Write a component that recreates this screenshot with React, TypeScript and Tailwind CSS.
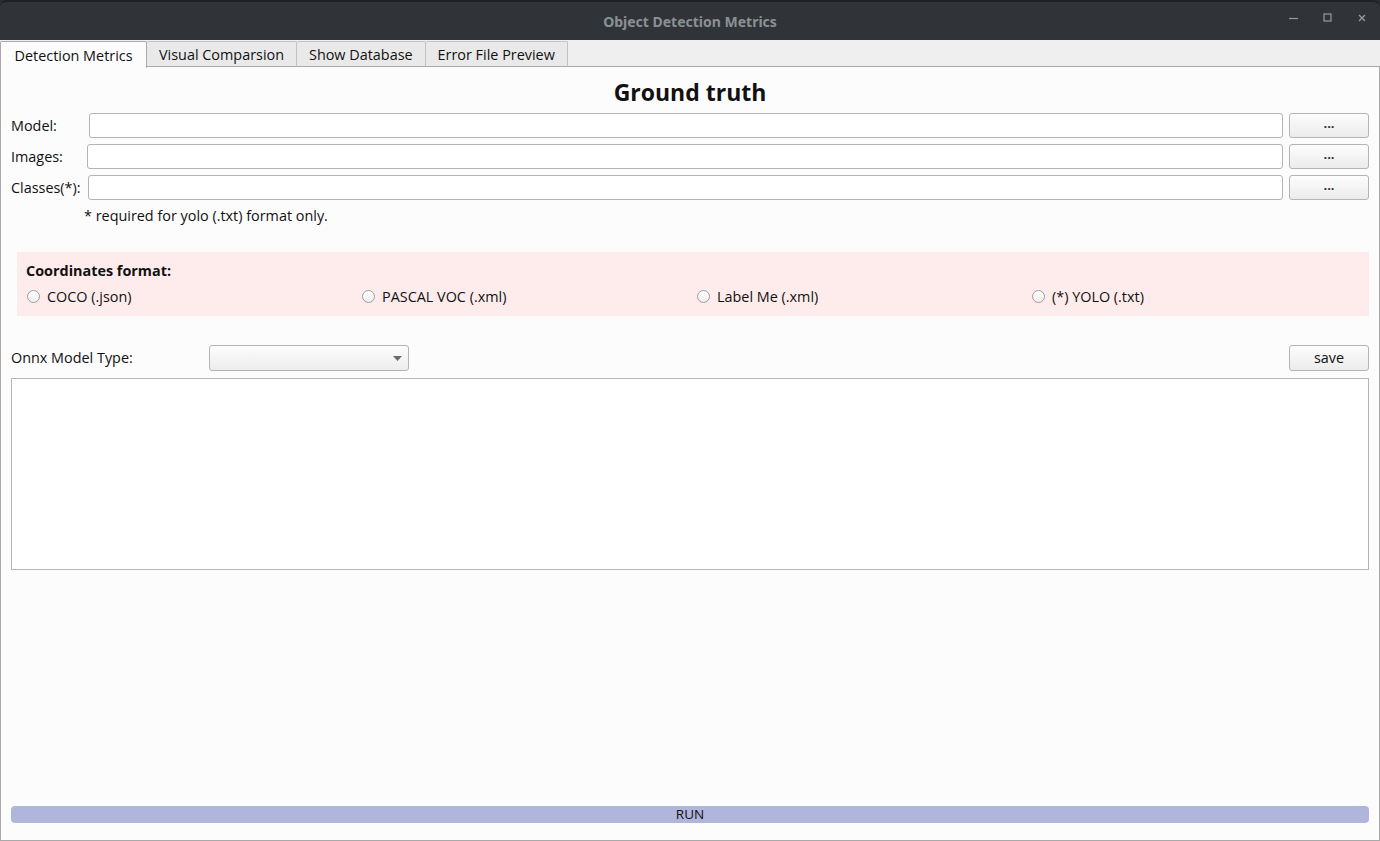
import { useState } from "react";

const tabs = ["Detection Metrics", "Visual Comparsion", "Show Database", "Error File Preview"];
const formats = ["COCO (.json)", "PASCAL VOC (.xml)", "Label Me (.xml)", "(*) YOLO (.txt)"];

function PathRow({ label, inputLeft }: { label: string; inputLeft: string }) {
    return (
        <div className="flex items-center h-[25px] pr-[10px]">
            <span className={`pl-[10px] shrink-0 ${inputLeft}`}>{label}</span>
            <div className="flex-1 h-[25px] bg-white border border-[#b4b4b4] rounded-[3px]" />
            <button className="ml-[6px] w-[80px] h-[25px] border border-[#b4b4b4] rounded-[3px] bg-gradient-to-b from-[#fcfcfc] to-[#ececec] text-[13px] leading-none pb-[4px] font-bold text-[#333]">
                ...
            </button>
        </div>
    );
}

function Radio({ label }: { label: string }) {
    return (
        <label className="flex items-center gap-[7px]">
            <span className="w-[13px] h-[13px] rounded-full border border-[#9e9e9e] bg-gradient-to-b from-white to-[#ededed]" />
            <span>{label}</span>
        </label>
    );
}

export default function App() {
    const [active] = useState(0);

    return (
        <div className="w-[1380px] h-[841px] bg-[#2b2e31] font-['Open_Sans',sans-serif] text-[14.4px] text-[#111] flex flex-col overflow-hidden">
            {/* title bar */}
            <div className="h-[40px] shrink-0 bg-[#303438] rounded-t-[7px] border-t-[2px] border-[#1e2123] flex items-center relative">
                <span className="flex-1 text-center font-bold text-[14px] text-[#8c9093] font-['Noto_Sans',sans-serif]">
                    Object Detection Metrics
                </span>
                <div className="absolute right-[11px] top-[9px] flex items-center gap-[20px]">
                    <svg width="14" height="14" viewBox="0 0 14 14">
                        <path d="M2 7.5h9" stroke="#9a9a9a" strokeWidth="1.2" />
                    </svg>
                    <svg width="14" height="14" viewBox="0 0 14 14">
                        <rect x="3" y="3" width="7" height="7" fill="none" stroke="#9a9a9a" strokeWidth="1.2" />
                    </svg>
                    <svg width="14" height="14" viewBox="0 0 14 14">
                        <path d="M4 4l6 6M10 4l-6 6" stroke="#9a9a9a" strokeWidth="1.3" />
                    </svg>
                </div>
            </div>

            {/* tabs */}
            <div className="h-[27px] shrink-0 bg-[#efefef] flex items-end">
                {tabs.map((t, i) =>
                    i === active ? (
                        <div
                            key={t}
                            className="h-[27px] px-[13.5px] pt-[2px] bg-[#fcfcfc] border border-b-0 border-[#aaaaaa] rounded-t-[2px] flex items-center relative top-[1px] z-10"
                        >
                            {t}
                        </div>
                    ) : (
                        <div
                            key={t}
                            className="h-[26px] px-[12px] pt-[2px] bg-[#e9e9e9] border border-l-0 border-[#c2c2c2] border-b-[#aaaaaa] rounded-t-[2px] flex items-center"
                        >
                            {t}
                        </div>
                    )
                )}
                <div className="flex-1 border-b border-[#aaaaaa]" />
            </div>

            {/* pane */}
            <div className="flex-1 bg-[#fcfcfc] border-x border-b border-[#a9a9a9] flex flex-col">
                <h1 className="text-center font-bold text-[23px] leading-none mt-[14px] h-[25px]">Ground truth</h1>

                <div className="mt-[7px] flex flex-col gap-[6px]">
                    <PathRow label="Model:" inputLeft="w-[88px]" />
                    <PathRow label="Images:" inputLeft="w-[86px]" />
                    <PathRow label="Classes(*):" inputLeft="w-[87px]" />
                </div>
                <div className="pl-[83px] mt-[5px] h-[20px]">* required for yolo (.txt) format only.</div>

                <div className="ml-[16px] mr-[10px] mt-[27px] h-[64px] bg-[#feecec] pl-[9px] pt-[8px]">
                    <div className="font-bold">Coordinates format:</div>
                    <div className="grid grid-cols-4 mt-[4px] pl-[1px] pr-[2px]">
                        {formats.map((f) => (
                            <Radio key={f} label={f} />
                        ))}
                    </div>
                </div>

                <div className="mt-[29px] h-[26px] flex items-center pl-[10px] pr-[10px]">
                    <span className="w-[198px]">Onnx Model Type:</span>
                    <div className="w-[200px] h-[26px] border border-[#b4b4b4] rounded-[3px] bg-gradient-to-b from-[#fcfcfc] to-[#ededed] flex items-center justify-end pr-[6px]">
                        <svg width="9" height="5" viewBox="0 0 9 5">
                            <path d="M0 0h9L4.5 5z" fill="#6b6b6b" />
                        </svg>
                    </div>
                    <div className="flex-1" />
                    <button className="w-[80px] h-[26px] border border-[#b4b4b4] rounded-[3px] bg-gradient-to-b from-[#fcfcfc] to-[#ececec]">
                        save
                    </button>
                </div>

                <div className="mx-[10px] mt-[7px] h-[192px] bg-white border border-[#b5b5b5]" />

                <div className="flex-1" />
                <button className="mx-[10px] mb-[17px] h-[17px] rounded-[4px] bg-[#b0b5dc] text-[13.5px] leading-none">
                    RUN
                </button>
            </div>
        </div>
    );
}
